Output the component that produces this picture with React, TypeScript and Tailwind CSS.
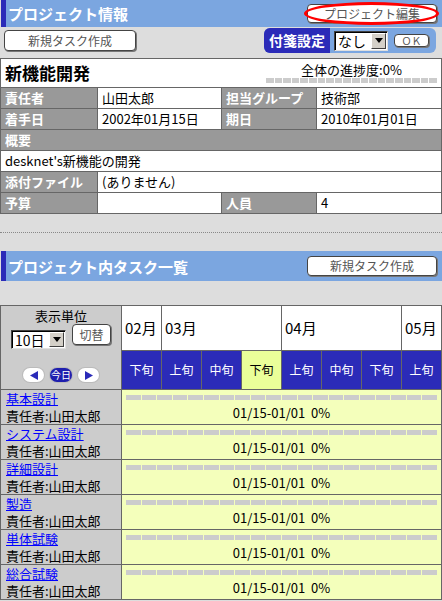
import React from 'react';

const Btn = ({ children, className = '' }: { children: React.ReactNode; className?: string }) => (
  <div
    className={`flex items-center justify-center bg-white border border-[#444] rounded-[4px] shadow-[1px_1px_0_#777] text-[#555] text-[12px] leading-none ${className}`}
  >
    {children}
  </div>
);

const Sel = ({ text, className = '' }: { text: string; className?: string }) => (
  <div
    className={`flex items-stretch bg-white border border-t-[#404040] border-l-[#404040] border-b-[#e0e0e0] border-r-[#e0e0e0] shadow-[inset_1px_1px_0_#000] ${className}`}
  >
    <span className="flex-1 pl-[3px] text-[14px] leading-none flex items-center text-black">{text}</span>
    <div className="w-[15px] my-[1px] mr-[1px] bg-[#d4d0c8] border border-t-[#fff] border-l-[#fff] border-b-[#404040] border-r-[#404040] flex items-center justify-center">
      <svg width="8" height="5" viewBox="0 0 8 5">
        <path d="M0 0H8L4 5Z" fill="#000" />
      </svg>
    </div>
  </div>
);

const Segs = ({ n, h }: { n: number; h: string }) => (
  <div className="flex gap-px">
    {Array.from({ length: n }).map((_, i) => (
      <div key={i} className={`flex-1 ${h} bg-[#cccccc]`} />
    ))}
  </div>
);

const NavTri = ({ dir }: { dir: 'l' | 'r' }) => (
  <div className="w-[21px] h-[14px] rounded-full bg-white shadow-[0_0_0_1px_#bbbbbb] flex items-center justify-center">
    <svg width="8" height="9" viewBox="0 0 8 9">
      {dir === 'l' ? <path d="M8 0V9L0 4.5Z" fill="#2b2bb8" /> : <path d="M0 0V9L8 4.5Z" fill="#2b2bb8" />}
    </svg>
  </div>
);

const tasks = ['基本設計', 'システム設計', '詳細設計', '製造', '単体試験', '総合試験'];
const junk = ['下旬', '上旬', '中旬', '下旬', '上旬', '中旬', '下旬', '上旬'];

export default function App() {
  return (
    <div className="w-[442px] h-[601px] overflow-hidden bg-[#dddddd] text-black font-['Noto_Sans_CJK_JP','Noto_Sans',sans-serif]">
      {/* Header 1 */}
      <div className="h-[27px] ml-px bg-[#7ba6e0] border-l-[5px] border-[#2b2bb8] flex items-center justify-between">
        <span className="pl-[2px] text-white font-bold text-[15px] leading-none">プロジェクト情報</span>
        <div className="relative mr-[5px]">
          <Btn className="w-[130px] h-[19px]">プロジェクト編集</Btn>
          <div className="absolute -left-[3px] -right-[2px] -top-[2px] -bottom-[2px] rounded-[50%] border-[3px] border-[#ff0000]" />
        </div>
      </div>

      {/* Row 2 */}
      <div className="h-[31px] flex items-start justify-between pl-[4px] pr-[6px]">
        <Btn className="mt-[3px] w-[132px] h-[21px]">新規タスク作成</Btn>
        <div className="mt-[1px] h-[25px] w-[172px] flex items-center bg-[#7ba6e0] rounded-[6px]">
          <div className="h-full w-[66px] bg-[#2b2bb8] rounded-l-[6px] flex items-center justify-center text-white font-bold text-[14px]">
            付箋設定
          </div>
          <Sel text="なし" className="ml-[4px] w-[54px] h-[20px]" />
          <div className="ml-[6px] w-[35px] h-[13px] bg-white border border-[#444] rounded-[4px] shadow-[1px_1px_0_#777] flex items-center justify-center text-[10px] leading-none text-[#555]">
            ＯＫ
          </div>
        </div>
      </div>

      {/* Project info table */}
      <div className="bg-[#666666] p-px flex flex-col gap-px">
        <div className="h-[28px] bg-white flex justify-between">
          <span className="pl-[4px] font-bold text-[17px] leading-[28px]">新機能開発</span>
          <div className="w-[171px] mr-[4px] flex flex-col">
            <span className="text-center text-[13px] leading-[14px] mt-[4px]">全体の進捗度:0%</span>
            <div className="mt-[1px]">
              <Segs n={20} h="h-[5px]" />
            </div>
          </div>
        </div>
        <div className="grid grid-cols-[96px_123px_94px_124px] gap-px h-[20px] text-[13px] leading-[20px]">
          <div className="bg-[#999999] text-white font-bold pl-[4px]">責任者</div>
          <div className="bg-white pl-[4px]">山田太郎</div>
          <div className="bg-[#999999] text-white font-bold pl-[4px]">担当グループ</div>
          <div className="bg-white pl-[4px]">技術部</div>
        </div>
        <div className="grid grid-cols-[96px_123px_94px_124px] gap-px h-[20px] text-[13px] leading-[20px]">
          <div className="bg-[#999999] text-white font-bold pl-[4px]">着手日</div>
          <div className="bg-white pl-[4px]">2002年01月15日</div>
          <div className="bg-[#999999] text-white font-bold pl-[4px]">期日</div>
          <div className="bg-white pl-[4px]">2010年01月01日</div>
        </div>
        <div className="h-[20px] bg-[#999999] text-white font-bold pl-[4px] text-[13px] leading-[20px]">概要</div>
        <div className="h-[20px] bg-white pl-[4px] text-[13px] leading-[20px]">desknet's新機能の開発</div>
        <div className="grid grid-cols-[96px_1fr] gap-px h-[20px] text-[13px] leading-[20px]">
          <div className="bg-[#999999] text-white font-bold pl-[4px]">添付ファイル</div>
          <div className="bg-white pl-[4px]">(ありません)</div>
        </div>
        <div className="grid grid-cols-[96px_123px_94px_124px] gap-px h-[20px] text-[13px] leading-[20px]">
          <div className="bg-[#999999] text-white font-bold pl-[4px]">予算</div>
          <div className="bg-white pl-[4px]"></div>
          <div className="bg-[#999999] text-white font-bold pl-[4px]">人員</div>
          <div className="bg-white pl-[4px]">4</div>
        </div>
      </div>

      {/* Separator */}
      <div className="h-[18px]" />
      <div className="border-t border-dotted border-[#888888]" />
      <div className="h-[18px]" />

      {/* Header 2 */}
      <div className="h-[30px] ml-px bg-[#7ba6e0] border-l-[5px] border-[#2b2bb8] flex items-center justify-between">
        <span className="pl-[2px] text-white font-bold text-[15px] leading-none">プロジェクト内タスク一覧</span>
        <Btn className="mr-[5px] w-[130px] h-[20px]">新規タスク作成</Btn>
      </div>
      <div className="h-[24px]" />

      {/* Gantt */}
      <div className="grid grid-cols-[120px_repeat(8,39px)] grid-rows-[44px_38px_repeat(6,34px)] gap-px bg-[#666666] p-px">
        <div className="row-span-2 bg-[#cccccc] flex flex-col items-center">
          <div className="mt-[1px] h-[17px] leading-[17px] text-[13px]">表示単位</div>
          <div className="flex items-start gap-[6px]">
            <Sel text="10日" className="mt-[6px] w-[55px] h-[19px]" />
            <Btn className="w-[39px] h-[21px] text-[12px]">切替</Btn>
          </div>
          <div className="mt-[19px] flex items-center gap-[6px]">
            <NavTri dir="l" />
            <div className="w-[22px] h-[14px] rounded-full bg-[#1f1fae] shadow-[0_0_0_1px_#bbbbbb] flex items-center justify-center text-white text-[10px] leading-none">
              今日
            </div>
            <NavTri dir="r" />
          </div>
        </div>
        <div className="bg-white flex items-center pl-[3px] text-[15px]">02月</div>
        <div className="col-span-3 bg-white flex items-center pl-[3px] text-[15px]">03月</div>
        <div className="col-span-3 bg-white flex items-center pl-[3px] text-[15px]">04月</div>
        <div className="bg-white flex items-center pl-[3px] text-[15px]">05月</div>
        {junk.map((j, i) =>
          i === 3 ? (
            <div key={i} className="bg-[#eaff99] text-black flex items-center justify-center text-[12px]">
              {j}
            </div>
          ) : (
            <div key={i} className="bg-[#2b2bb8] text-white flex items-center justify-center text-[12px]">
              {j}
            </div>
          )
        )}
        {tasks.map((t) => (
          <React.Fragment key={t}>
            <div className="bg-[#cccccc] pl-[5px] text-[13px] leading-[17px]">
              <div className="text-[#0000ff] underline">{t}</div>
              <div>責任者:山田太郎</div>
            </div>
            <div className="col-span-8 bg-[#f4ffbb] px-[4px] flex flex-col">
              <div className="mt-[5px]">
                <Segs n={20} h="h-[5px]" />
              </div>
              <div className="mt-[5px] text-center text-[13px] leading-[15px]">01/15-01/01&nbsp;&nbsp;0%</div>
            </div>
          </React.Fragment>
        ))}
      </div>
    </div>
  );
}
